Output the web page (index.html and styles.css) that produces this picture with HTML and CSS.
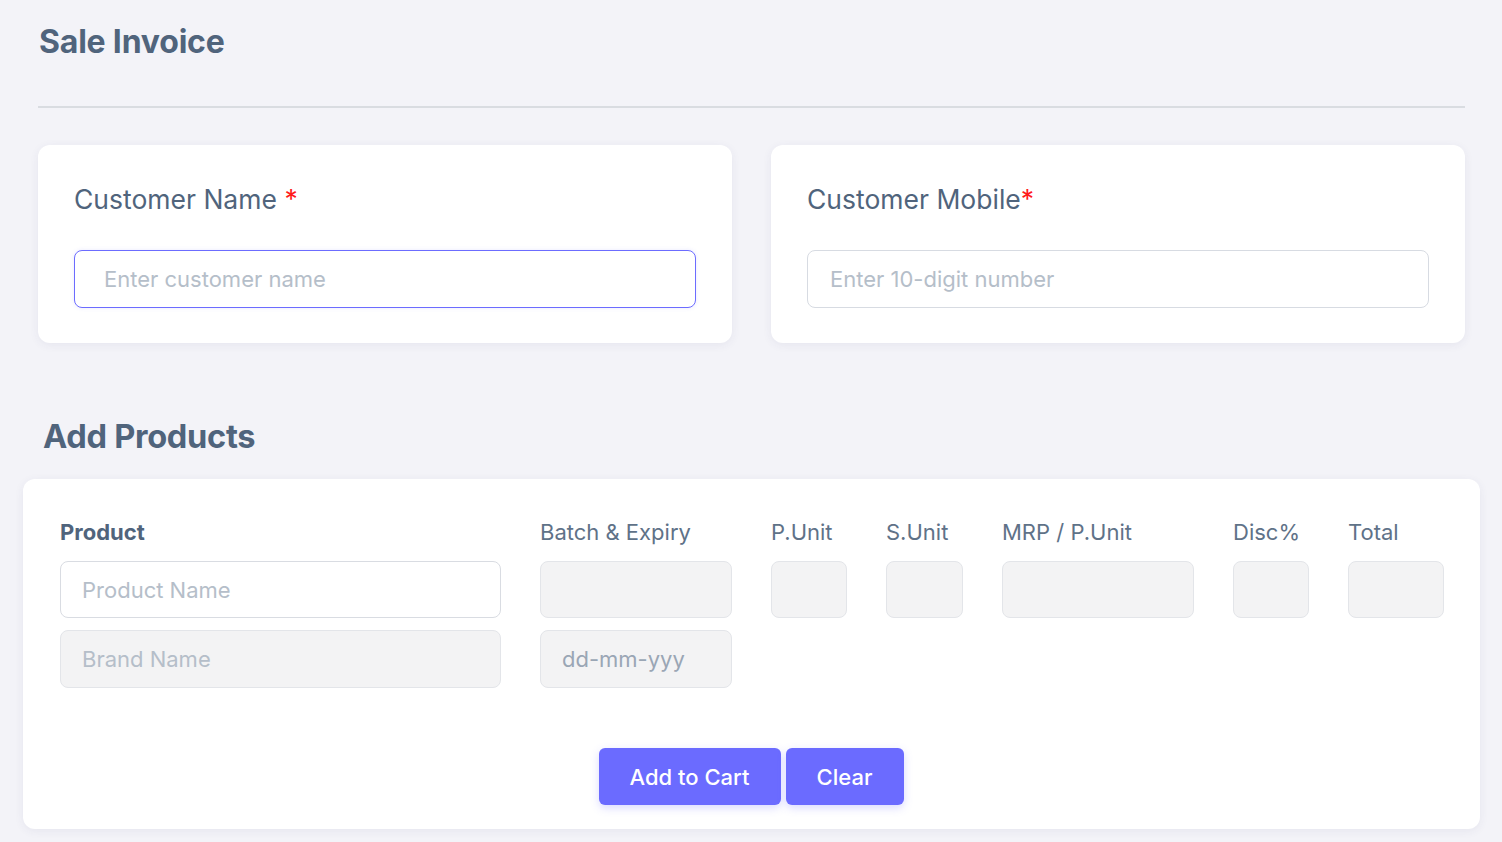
FILE: index.html
```html
<!DOCTYPE html>
<html lang="en">
<head>
<meta charset="utf-8">
<title>Sale Invoice</title>
<link rel="stylesheet" href="styles.css">
</head>
<body>
<main class="page">
  <h1 class="page-title">Sale Invoice</h1>
  <hr class="divider">

  <section class="customer-row">
    <div class="card customer-card">
      <label class="field-label">Customer Name <span class="req">*</span></label>
      <input class="text-input focused" type="text" placeholder="Enter customer name">
    </div>
    <div class="card customer-card">
      <label class="field-label">Customer Mobile<span class="req">*</span></label>
      <input class="text-input mobile" type="text" placeholder="Enter 10-digit number">
    </div>
  </section>

  <h2 class="section-title">Add Products</h2>

  <section class="card products-card">
    <div class="product-grid">
      <div class="col">
        <div class="col-label bold">Product</div>
        <input class="cell-input white" type="text" placeholder="Product Name">
        <input class="cell-input tall" type="text" placeholder="Brand Name" disabled>
      </div>
      <div class="col">
        <div class="col-label">Batch &amp; Expiry</div>
        <input class="cell-input" type="text">
        <input class="cell-input tall date" type="text" placeholder="dd-mm-yyy">
      </div>
      <div class="col">
        <div class="col-label">P.Unit</div>
        <input class="cell-input" type="text">
      </div>
      <div class="col">
        <div class="col-label">S.Unit</div>
        <input class="cell-input" type="text">
      </div>
      <div class="col">
        <div class="col-label">MRP / P.Unit</div>
        <input class="cell-input" type="text">
      </div>
      <div class="col">
        <div class="col-label">Disc%</div>
        <input class="cell-input" type="text">
      </div>
      <div class="col">
        <div class="col-label">Total</div>
        <input class="cell-input" type="text">
      </div>
    </div>
    <div class="actions">
      <button class="btn btn-cart" type="button">Add to Cart</button>
      <button class="btn btn-clear" type="button">Clear</button>
    </div>
  </section>
</main>
</body>
</html>
```

FILE: styles.css
```css
* { box-sizing: border-box; }

html, body {
  margin: 0;
  padding: 0;
  background: #f3f3f8;
}

body {
  font-family: "Inter", "Noto Sans", "Liberation Sans", sans-serif;
  color: #50647c;
}

.page {
  padding: 19px 37px 0 38px;
  height: 842px;
  overflow: hidden;
}

.page-title {
  margin: 0 0 0 1px;
  font-size: 32px;
  font-weight: 700;
  line-height: 46px;
  color: #50647c;
  letter-spacing: -0.2px;
}

.divider {
  margin: 41px 0 0 0;
  border: 0;
  height: 2px;
  background: #d9dce1;
}

.customer-row {
  margin-top: 37px;
  display: grid;
  grid-template-columns: 694px 694px;
  gap: 39px;
}

.card {
  background: #ffffff;
  border-radius: 12px;
  box-shadow: 0 2px 10px rgba(60, 60, 110, 0.07);
}

.customer-card {
  height: 198px;
  padding: 37px 36px 0 36px;
}

.field-label {
  display: block;
  font-size: 26.5px;
  line-height: 34px;
  font-weight: 400;
  color: #50647c;
}

.req {
  color: #ff1a1a;
}

.text-input {
  display: block;
  margin-top: 34px;
  width: 622px;
  height: 58px;
  border: 1px solid #d7dbe2;
  border-radius: 8px;
  background: #ffffff;
  font-family: inherit;
  font-size: 22px;
  color: #50647c;
  padding: 0 22px;
  outline: none;
}

.text-input.focused {
  border-color: #6c6cff;
  padding-left: 29px;
  box-shadow: 0 0 4px rgba(108, 108, 255, 0.15);
}

.text-input::placeholder,
.cell-input::placeholder {
  color: #b5bec9;
  opacity: 1;
}

.section-title {
  margin: 71px 0 0 5px;
  font-size: 32.6px;
  font-weight: 700;
  line-height: 44px;
  color: #50647c;
  letter-spacing: -0.3px;
}

.products-card {
  margin: 21px 0 0 -15px;
  width: 1457px;
  height: 350px;
  padding: 38px 36px 0 37px;
}

.product-grid {
  display: grid;
  grid-template-columns: 441px 192px 76px 77px 192px 76px 96px;
  column-gap: 39px;
}

.col {
  display: flex;
  flex-direction: column;
  gap: 12px;
}

.col-label {
  font-size: 22px;
  line-height: 30px;
  color: #5f7288;
  margin-bottom: 2px;
}

.col-label.bold {
  font-weight: 700;
  color: #50647c;
}

.cell-input {
  display: block;
  width: 100%;
  height: 57px;
  border: 1px solid #e3e5e9;
  border-radius: 8px;
  background: #f3f3f4;
  font-family: inherit;
  font-size: 22px;
  padding: 0 21px;
  color: #50647c;
  outline: none;
}

.cell-input.tall {
  height: 58px;
}

.cell-input.white {
  background: #ffffff;
  border-color: #d9dce2;
}

.cell-input.date::placeholder {
  color: #9aa6b5;
}

.actions {
  margin-top: 60px;
  display: flex;
  justify-content: center;
  gap: 5px;
  padding-right: 2px;
}

.btn {
  height: 57px;
  border: 0;
  border-radius: 6px;
  background: #6b6bff;
  color: #ffffff;
  font-family: inherit;
  font-size: 22px;
  font-weight: 500;
  box-shadow: 0 3px 8px rgba(107, 107, 255, 0.25);
  cursor: pointer;
}

.btn-cart { width: 182px; }
.btn-clear { width: 118px; }
```
